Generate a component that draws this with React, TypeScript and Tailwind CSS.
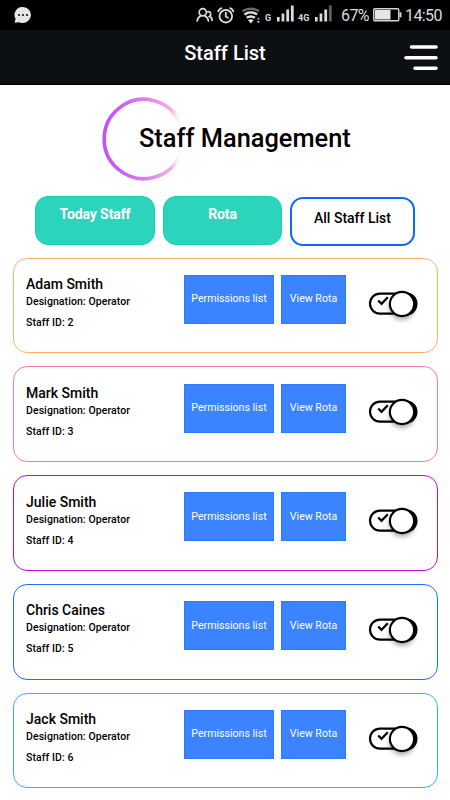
import { useState } from "react";

interface Staff {
    id: number;
    name: string;
    designation: string;
    border: string;
}

const STAFF: Staff[] = [
    { id: 2, name: "Adam Smith", designation: "Operator", border: "border-[#fbb166]" },
    { id: 3, name: "Mark Smith", designation: "Operator", border: "border-[#f877b6]" },
    { id: 4, name: "Julie Smith", designation: "Operator", border: "border-[#b80fdc]" },
    { id: 5, name: "Chris Caines", designation: "Operator", border: "border-[#1c6ff8]" },
    { id: 6, name: "Jack Smith", designation: "Operator", border: "border-[#30b8da]" },
];

const ChatIcon = () => (
    <svg width="18" height="17" viewBox="0 0 18 17">
        <path d="M9 0a8 8 0 1 1-3.6 15.2L.6 15.8 1.6 12A8 8 0 0 1 9 0Z" fill="#e6e6e6" />
        <circle cx="5" cy="8" r="1" fill="#000" />
        <circle cx="9" cy="8" r="1" fill="#000" />
        <circle cx="13" cy="8" r="1" fill="#000" />
    </svg>
);

const PeopleIcon = () => (
    <svg width="18" height="16" viewBox="0 0 18 16" fill="none" stroke="#dedede" strokeWidth="1.7" strokeLinecap="round">
        <circle cx="6.8" cy="5.3" r="3.6" />
        <path d="M1.2 14c.2-2.6 1.5-4 3.4-5M9 9c1.9 1 3.2 2.4 3.4 5" />
        <path d="M11.8 4.7c2.6-.7 4.2 2.7 1.7 4.7 1.5.6 2.5 1.9 2.7 4" />
    </svg>
);

const AlarmIcon = () => (
    <svg width="18" height="17" viewBox="0 0 18 17" fill="none" stroke="#dedede" strokeWidth="1.8" strokeLinecap="round">
        <circle cx="8.8" cy="9.2" r="6.3" />
        <path d="M8.8 5.7v3.8l2.1 1.2M1.2 4.4C1.8 2.9 2.9 1.8 4.4 1.2M16.4 4.4C15.8 2.9 14.7 1.8 13.2 1.2" />
    </svg>
);

const WifiIcon = () => (
    <svg width="20" height="17" viewBox="0 0 20 17" fill="none" stroke="#e2e2e2" strokeWidth="2.5">
        <path d="M.6 4.2C5.5.9 12.1.9 17 4.2" stroke="#6a6a6a" />
        <path d="M2.5 7.6c3.7-2.7 8.9-2.7 12.6 0" />
        <path d="M4.7 10.8c2.5-1.7 5.7-1.7 8.2 0" />
        <path d="M6 13.2c1.7-1.2 3.9-1.2 5.6 0L8.8 16.6Z" fill="#e2e2e2" stroke="none" />
        <path d="m14.8 12.6 1.6-2.1 1.6 2.1ZM14.8 14.1l1.6 2.1 1.6-2.1Z" fill="#bdbdbd" stroke="none" />
    </svg>
);

const SignalIcon = ({ dim = false }: { dim?: boolean }) => (
    <svg width="17" height="17" viewBox="0 0 17 17" fill="#dcdcdc">
        <rect x="0" y="12" width="2.6" height="4.5" />
        <rect x="4.6" y="8.5" width="2.7" height="8" />
        <rect x="9.3" y="4.5" width="2.8" height="12" />
        <rect x="13.9" y="0.5" width="2.8" height="16" fill={dim ? "#606060" : "#dcdcdc"} />
    </svg>
);

const BatteryIcon = () => (
    <svg width="29" height="14" viewBox="0 0 29 14">
        <rect x=".75" y=".75" width="25" height="12" rx="1" fill="none" stroke="#d5d5d5" strokeWidth="1.4" />
        <rect x="2" y="2" width="15.5" height="9.5" fill="#e6e6e6" />
        <rect x="26.5" y="4.3" width="2" height="5" fill="#d5d5d5" />
    </svg>
);

const StatusBar = () => (
    <div className="h-[30px] bg-black flex items-center pl-[14px] pr-2 text-[#dcdcdc]">
        <ChatIcon />
        <div className="ml-auto flex items-center">
            <PeopleIcon />
            <div className="ml-[3px]"><AlarmIcon /></div>
            <div className="ml-[7px] mt-[1px]"><WifiIcon /></div>
            <span className="ml-[3px] mt-[6px] w-[9px] text-[9px] leading-none font-bold">G</span>
            <div className="ml-[3px] mb-[3px]"><SignalIcon /></div>
            <span className="ml-[4px] mt-[6px] w-[14px] text-[9px] leading-none font-bold">4G</span>
            <div className="ml-[3px] mb-[3px]"><SignalIcon dim /></div>
            <span className="ml-[9px] mt-[2px] w-[29px] text-[16px] leading-none tracking-[-0.6px]">67%</span>
            <div className="ml-[3px]"><BatteryIcon /></div>
            <span className="ml-[3px] mt-[2px] w-[37px] text-[16px] leading-none tracking-[-0.6px]">14:50</span>
        </div>
    </div>
);

const Header = () => (
    <header className="relative h-[55px] bg-[#0c1013] border-b border-black text-center">
        <h1 className="pt-[9px] text-[20px] leading-[28px] font-medium text-white">Staff List</h1>
        <button className="absolute right-[12px] top-[14px]" aria-label="Menu">
            <svg width="34" height="27" viewBox="0 0 34 27" stroke="#fff" strokeWidth="3.6" strokeLinecap="round">
                <path d="M7.5 3H32M2 13.7H32M11 24.3H32" />
            </svg>
        </button>
    </header>
);

const Ring = () => (
    <svg width="84" height="84" viewBox="0 0 84 84" fill="none">
        <defs>
            <linearGradient id="ring" gradientUnits="userSpaceOnUse" x1="0" y1="0" x2="80" y2="0">
                <stop offset="0" stopColor="#c44dff" />
                <stop offset=".3" stopColor="#cd62f8" />
                <stop offset=".65" stopColor="#e48be8" />
                <stop offset=".88" stopColor="#f3b0e6" />
                <stop offset="1" stopColor="#fbe0f6" stopOpacity="0" />
            </linearGradient>
        </defs>
        <path d="M79 25.5A39.7 39.7 0 1 0 79 58.5" stroke="url(#ring)" strokeWidth="3.6" />
    </svg>
);

const Toggle = ({ on, onChange }: { on: boolean; onChange: () => void }) => (
    <button onClick={onChange} role="switch" aria-checked={on}>
        <svg width="56" height="38" viewBox="0 0 56 38" fill="none">
            <defs>
                <filter id="knob" x="-30%" y="-30%" width="170%" height="180%">
                    <feDropShadow dx="0" dy="3" stdDeviation="2" floodOpacity=".3" />
                </filter>
            </defs>
            <rect x="5" y="8.6" width="46" height="20" rx="10" stroke="#000" strokeWidth="2.2" fill="#fff" />
            <path d="M38 7.5h3a11.5 11.5 0 0 1 0 23H38Z" fill="#000" />
            <path d="m13.2 15.5 3.3 3.3 6.3-6.6" stroke="#000" strokeWidth="2.3" />
            <circle cx="37" cy="19" r="12.1" fill="#fff" stroke="#000" strokeWidth="2.1" filter="url(#knob)" />
        </svg>
    </button>
);

const StaffCard = ({ staff }: { staff: Staff }) => {
    const [active, setActive] = useState(true);

    return (
        <div className={`flex h-[95.75px] rounded-[14px] border pl-[12.5px] pt-[16.3px] ${staff.border}`}>
            <div className="-mt-[0.8px] w-[158px]">
                <h3 className="text-[14px] leading-[20px] font-medium">{staff.name}</h3>
                <p className="text-[10.5px] leading-[15px] font-medium tracking-[0.08px]">Designation: {staff.designation}</p>
                <p className="mt-[6px] text-[10.5px] leading-[15px] font-medium tracking-[0.08px]">Staff ID: {staff.id}</p>
            </div>
            <button className="h-[49px] w-[90px] bg-[#3c83ff] border border-[#2a7bff] text-[10.6px] text-white">Permissions list</button>
            <button className="ml-[7px] h-[49px] w-[65px] bg-[#3c83ff] border border-[#2a7bff] text-[10.6px] text-white">View Rota</button>
            <div className="ml-[19px] mt-[9.7px]">
                <Toggle on={active} onChange={() => setActive(!active)} />
            </div>
        </div>
    );
};

export default function App() {
    return (
        <div className="h-[800px] w-[450px] overflow-hidden bg-white text-black font-['Roboto','Liberation_Sans',sans-serif]">
            <StatusBar />
            <Header />

            {/* Title */}
            <section className="relative h-[111px] pt-[35px] pl-[139px]">
                <div className="absolute left-[101px] top-[12px]"><Ring /></div>
                <h2 className="relative text-[25.4px] leading-[36px] font-medium whitespace-nowrap">Staff Management</h2>
            </section>

            {/* Tabs */}
            <nav className="flex items-start pl-[35px] h-[61.6px]">
                <button className="h-[49px] w-[120px] rounded-[13px] border border-[#15cfae] bg-[#2dd4bc] pb-[13px] text-[14px] tracking-[-0.1px] font-bold text-white">Today Staff</button>
                <button className="ml-[8px] h-[49px] w-[119px] rounded-[13px] border border-[#15cfae] bg-[#2dd4bc] pb-[13px] text-[14px] tracking-[-0.1px] font-bold text-white">Rota</button>
                <button className="ml-[8px] mt-[1px] h-[49px] w-[125px] rounded-[13px] border-2 border-[#0d68f8] pb-[7px] text-[14px] font-medium">All Staff List</button>
            </nav>

            {/* Staff list */}
            <main className="flex flex-col gap-[13px] px-[12.5px]">
                {STAFF.map(staff => (
                    <StaffCard key={staff.id} staff={staff} />
                ))}
            </main>
        </div>
    );
}
